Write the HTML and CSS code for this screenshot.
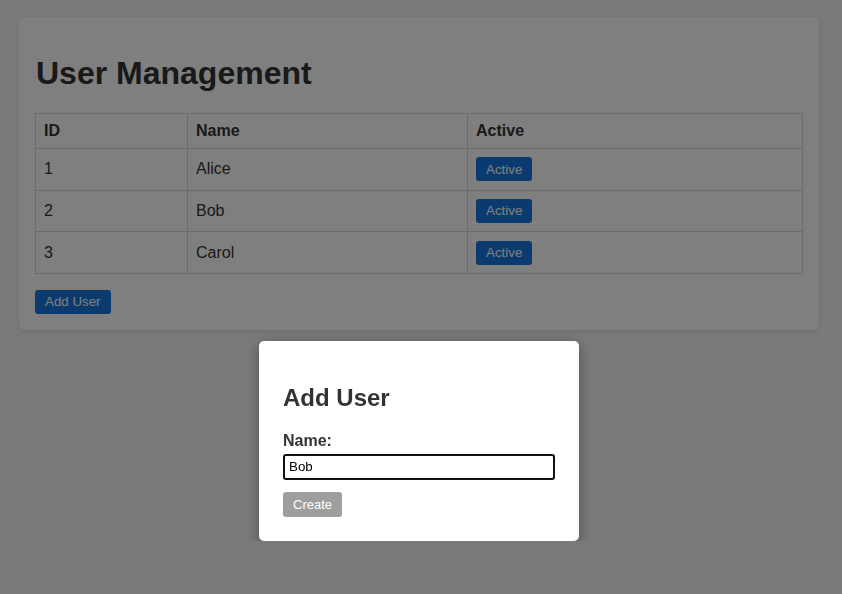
FILE: index.html
```html
<!DOCTYPE html>
<html lang="en">
<head>
<meta charset="utf-8">
<title>User Management</title>
<link rel="stylesheet" href="styles.css">
</head>
<body>
<div class="page">
  <div class="card">
    <h1 class="title">User Management</h1>
    <table class="users">
      <thead>
        <tr><th class="col-id">ID</th><th class="col-name">Name</th><th>Active</th></tr>
      </thead>
      <tbody>
        <tr><td>1</td><td>Alice</td><td><button class="btn btn-primary">Active</button></td></tr>
        <tr><td>2</td><td>Bob</td><td><button class="btn btn-primary">Active</button></td></tr>
        <tr><td>3</td><td>Carol</td><td><button class="btn btn-primary">Active</button></td></tr>
      </tbody>
    </table>
    <button class="btn btn-primary add-btn">Add User</button>
  </div>
  <div class="overlay"></div>
  <div class="modal">
    <h2 class="modal-title">Add User</h2>
    <label class="field-label" for="name">Name:</label>
    <input class="field-input" id="name" type="text" value="Bob" autofocus>
    <button class="btn btn-disabled">Create</button>
  </div>
</div>
</body>
</html>
```
FILE: styles.css
```css
html, body {
  margin: 0;
  padding: 0;
}
body {
  background: #f5f5f5;
  font-family: "Liberation Sans", Arial, sans-serif;
  color: #333;
}
.page {
  width: 800px;
  padding: 17px 0 0 19px;
}
.card {
  background: #fff;
  border-radius: 6px;
  box-shadow: 0 2px 6px rgba(0, 0, 0, 0.1);
  padding: 0 16px 16px 16px;
  overflow: hidden;
}
.title {
  font-size: 32px;
  font-weight: bold;
  margin: 38px 0 21px 1px;
  line-height: 37px;
  color: #333;
}
.users {
  width: 768px;
  border-collapse: collapse;
  font-size: 16px;
}
.users th, .users td {
  border: 1px solid #d9d9d9;
  padding: 8px;
  text-align: left;
  line-height: 18px;
}
.users th {
  font-weight: bold;
}
.users td {
  height: 24.67px;
  padding-top: 8px;
  padding-bottom: 8px;
}
.col-id { width: 135px; }
.col-name { width: 263px; }
.btn {
  box-sizing: border-box;
  height: 24px;
  font-family: "Liberation Sans", Arial, sans-serif;
  font-size: 13.33px;
  line-height: 15px;
  border: none;
  border-radius: 3px;
  padding: 0 10px;
  color: #fff;
  cursor: pointer;
  vertical-align: middle;
}
.btn-primary {
  background: #1677dc;
}
.add-btn {
  display: block;
  margin-top: 16px;
}
.overlay {
  position: fixed;
  inset: 0;
  background: rgba(0, 0, 0, 0.5);
}
.modal {
  position: relative;
  width: 272px;
  margin: 11px 0 0 240px;
  background: #fff;
  border-radius: 5px;
  box-shadow: 0 4px 14px rgba(0, 0, 0, 0.35);
  padding: 24px;
  display: flex;
  flex-direction: column;
  align-items: flex-start;
}
.modal-title {
  font-size: 24px;
  font-weight: bold;
  line-height: 28px;
  margin: 19px 0 20px;
  color: #333;
}
.field-label {
  font-size: 16px;
  font-weight: bold;
  line-height: 18px;
  margin-bottom: 4px;
  color: #333;
}
.field-input {
  box-sizing: border-box;
  width: 272px;
  height: 26px;
  border: 2px solid #111;
  border-radius: 3px;
  padding: 2px 4px;
  font-family: "Liberation Sans", Arial, sans-serif;
  font-size: 13.33px;
  color: #000;
  outline: none;
}
.btn-disabled {
  background: #9e9e9e;
  margin-top: 12px;
  height: 25px;
  font-size: 13px;
}
```
